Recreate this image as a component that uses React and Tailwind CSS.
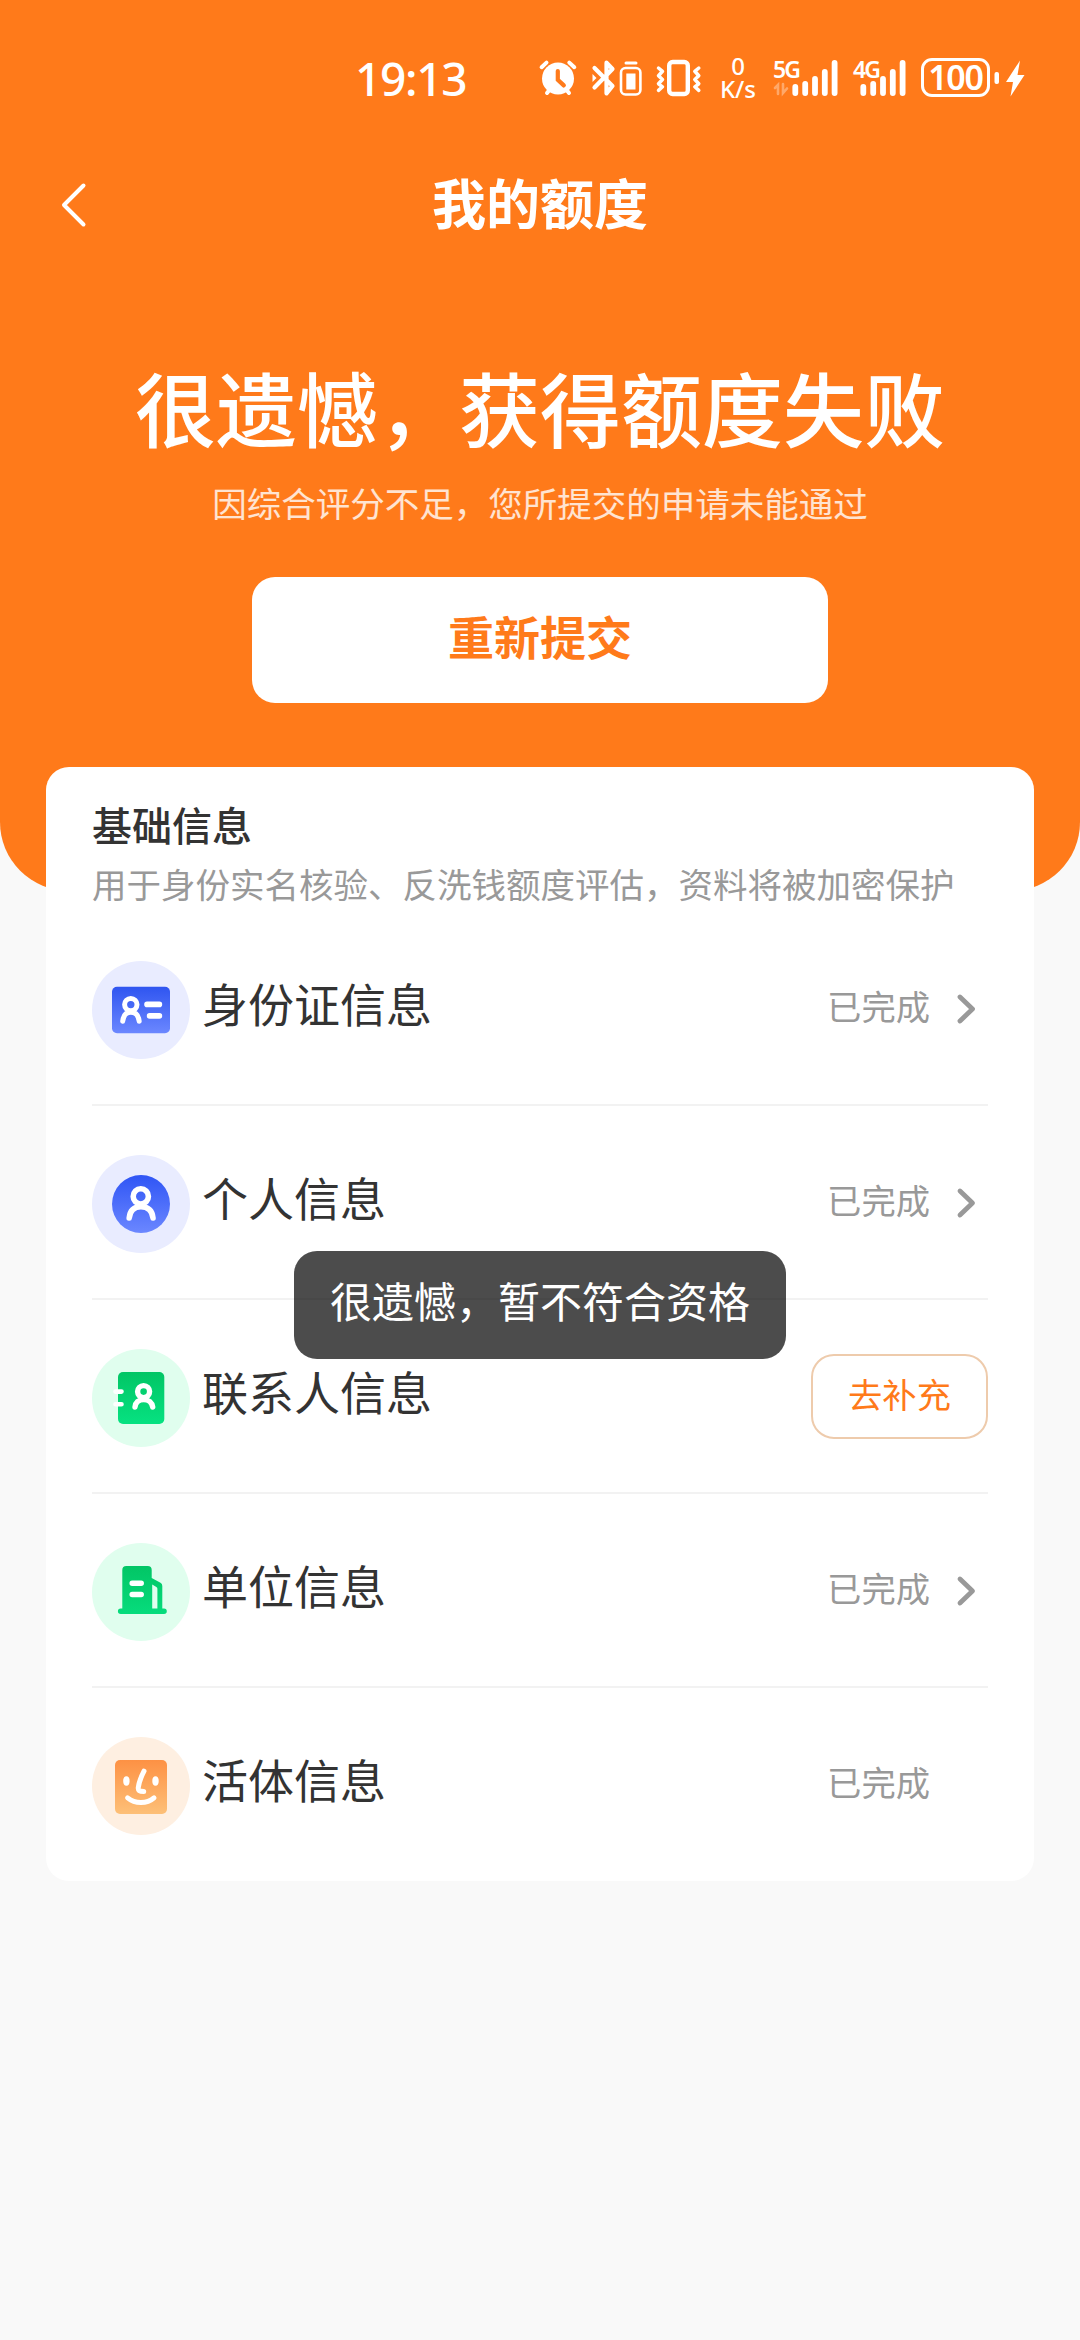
import { Fragment } from 'react'

const ITEMS = [
  { id: 'idcard', name: '身份证信息', icon: IdCardIcon, tone: 'bg-[#e9ecff]', status: 'done', arrow: true },
  { id: 'person', name: '个人信息', icon: PersonIcon, tone: 'bg-[#e9ecff]', status: 'done', arrow: true },
  { id: 'contact', name: '联系人信息', icon: ContactIcon, tone: 'bg-[#e0feee]', status: 'todo' },
  { id: 'company', name: '单位信息', icon: CompanyIcon, tone: 'bg-[#e0feee]', status: 'done', arrow: true },
  { id: 'face', name: '活体信息', icon: FaceIcon, tone: 'bg-[#feefe1]', status: 'done' },
]

function Gradient({ id, from, to }) {
  return (
    <defs>
      <linearGradient id={id} x1="0" y1="0" x2="0" y2="1">
        <stop offset="0" stopColor={from} />
        <stop offset="1" stopColor={to} />
      </linearGradient>
    </defs>
  )
}

function IdCardIcon() {
  return (
    <svg viewBox="0 0 98 98" className="size-full" fill="none" stroke="#fff" strokeWidth="5" strokeLinecap="round">
      <Gradient id="g-idcard" from="#2f55f0" to="#6b87ff" />
      <rect x="20" y="25.7" width="58" height="46.6" rx="5" fill="url(#g-idcard)" stroke="none" />
      <circle cx="38.8" cy="43.6" r="6.2" />
      <path d="M30.7 60.3C31.3 54.5 34 51.3 38.8 51.3S46.6 54.5 47.2 60.3" />
      <path d="M55 43.4h12.4M57.6 54.9h9.8" strokeWidth="5.6" />
    </svg>
  )
}

function PersonIcon() {
  return (
    <svg viewBox="0 0 98 98" className="size-full" fill="none" stroke="#fff" strokeWidth="5.6" strokeLinecap="round">
      <Gradient id="g-person" from="#2f55f5" to="#6b87ff" />
      <circle cx="49" cy="49" r="29" fill="url(#g-person)" stroke="none" />
      <circle cx="48.8" cy="41.4" r="7.6" />
      <path d="M37.2 63C38 55.5 42 51.8 48.9 51.8S60.2 55.5 61 63" />
    </svg>
  )
}

function ContactIcon() {
  return (
    <svg viewBox="0 0 98 98" className="size-full" fill="none" stroke="#fff" strokeWidth="5.4" strokeLinecap="round">
      <Gradient id="g-contact" from="#02c565" to="#06e281" />
      <rect x="26" y="23" width="46.3" height="52" rx="5" fill="url(#g-contact)" stroke="none" />
      <path d="M23.5 42.6h6M23.5 55.2h6" strokeWidth="4.6" />
      <circle cx="51.6" cy="42.6" r="6" />
      <path d="M43 58C43.5 53.5 46.5 50.6 51.6 50.6S60 53.5 60.7 58" />
    </svg>
  )
}

function CompanyIcon() {
  return (
    <svg viewBox="0 0 98 98" className="size-full" strokeLinecap="round">
      <Gradient id="g-company" from="#02c565" to="#06dc7c" />
      <path
        fill="url(#g-company)"
        d="M30.3 27a4 4 0 0 1 4-4h21.4a4 4 0 0 1 4 4v8l8.8 4.8a3.5 3.5 0 0 1 1.8 3.1v22.6h1.7a2.8 2.8 0 0 1 0 5.6H28.7a2.8 2.8 0 0 1 0-5.6h1.6z"
      />
      <path d="M60.2 41.6l4.2 2.4a2 2 0 0 1 1 1.7v19.8h-5.2z" fill="#e0feee" />
      <path d="M40.2 40.3h9M40.2 51.5h9" stroke="#fff" strokeWidth="5.5" />
    </svg>
  )
}

function FaceIcon() {
  return (
    <svg viewBox="0 0 98 98" className="size-full" fill="none" stroke="#fff" strokeWidth="5" strokeLinecap="round" strokeLinejoin="round">
      <Gradient id="g-face" from="#fd9144" to="#fdc078" />
      <rect x="23" y="23" width="52" height="54" rx="5" fill="url(#g-face)" stroke="none" />
      <ellipse cx="34.4" cy="44" rx="3.2" ry="4.8" fill="#fff" stroke="none" />
      <ellipse cx="63.5" cy="44" rx="3.2" ry="4.8" fill="#fff" stroke="none" />
      <path d="M52 34.2C49.5 39 47 45 46.3 50.5c-.4 3 1.2 4 5.4 4" />
      <path d="M35.6 60.8C43 67 55 67 62 60.8" />
    </svg>
  )
}

function SignalIcon({ label, className, arrows }) {
  return (
    <div className="relative h-[44px] w-[66px]">
      <span className={`absolute top-0 text-[23px] leading-[26px] font-semibold tracking-[-2px] ${className}`}>{label}</span>
      <svg viewBox="0 0 66 44" className="size-full" stroke="#fff" strokeWidth="5.8" strokeLinecap="round">
        <path d="M22.3 31v6M32.2 27.8v9.2M42 23v14M51.8 16v21M61.6 7v30" />
        {arrows && <path d="M2 32l3-3v9M10 28v9l4-4.5" fill="none" strokeWidth="2.6" opacity=".35" />}
      </svg>
    </div>
  )
}

function StatusBar() {
  return (
    <div className="flex h-[44px] text-white font-['Noto_Sans',sans-serif]">
      <div className="ml-[355px] w-[183px] text-[46px] leading-[44px] font-medium tracking-[-1.3px]">19:13</div>
      <svg viewBox="0 0 40 44" className="h-[44px] w-[40px]" stroke="#fff" strokeWidth="5" strokeLinecap="round" fill="none">
        <path d="M3.6 11.2L8.5 6.6M31.3 6.6l5 4.6M9 37l4-5M31 37l-4-5" strokeWidth="4" />
        <circle cx="20" cy="22.5" r="16" fill="#fff" stroke="none" />
        <path d="M19.8 15v8.8l6 5.6" stroke="#ff7a1a" strokeWidth="4.2" />
      </svg>
      <svg viewBox="0 0 52 44" className="ml-[13px] h-[44px] w-[52px]" stroke="#fff" fill="none" strokeLinecap="round" strokeLinejoin="round">
        <path d="M3.5 12l18 18-6 7.3V6.7l6 6.3-18 18.5" strokeWidth="4.2" />
        <path d="M1.5 18v8l4-4z" fill="#fff" stroke="none" />
        <rect x="30" y="12" width="19.4" height="26.5" rx="4.5" strokeWidth="2.6" />
        <rect x="35.3" y="17.5" width="9.2" height="16" fill="#fff" stroke="none" />
        <path d="M35 7h10" strokeWidth="3" />
      </svg>
      <svg viewBox="0 0 48 44" className="ml-[12px] h-[44px] w-[48px]" stroke="#fff" fill="none" strokeLinecap="round" strokeLinejoin="round">
        <rect x="14.2" y="6" width="18.6" height="32" rx="3.5" strokeWidth="4.4" />
        <path d="M3.5 12l4 3.3-4 4.4 4 3.8-4 4.3 4 3-4 3.6M43.8 12l-4 3.3 4 4.4-4 3.8 4 4.3-4 3 4 3.6" strokeWidth="3.5" />
      </svg>
      <div className="-mt-[2px] ml-[15px] w-[40px] text-center text-[24px] leading-[23px] font-medium">
        <div>0</div>
        <div>K/s</div>
      </div>
      <div className="ml-[15px]"><SignalIcon label="5G" className="left-0" arrows /></div>
      <div className="ml-[2px]"><SignalIcon label="4G" className="left-[12px]" /></div>
      <div className="ml-[14px] mt-[2px] flex h-[39px] w-[69px] items-center justify-center rounded-[11px] border-[3px] border-white text-[34px] font-semibold tracking-[-1.2px]">100</div>
      <svg viewBox="0 0 36 44" className="ml-[3px] h-[44px] w-[36px]" fill="#fff">
        <rect x="1.5" y="16" width="4.5" height="12" rx="2" />
        <path d="M27 4.5L13 26h7l-2.5 14.5L31.5 19h-7z" />
      </svg>
    </div>
  )
}

function ItemRow({ item }) {
  const Icon = item.icon
  return (
    <div className="flex h-[192px] items-center">
      <div className={`mt-[4px] size-[98px] rounded-full ${item.tone}`}><Icon /></div>
      <div className="ml-[12px] -mt-[12px] flex-1 text-[46px] leading-[60px] text-[#333]">{item.name}</div>
      {item.status === 'todo' ? (
        <button className="h-[85px] w-[177px] rounded-[23px] border-2 border-[#eecbac] pb-[6px] text-[34.3px] leading-[50px] text-[#ff7a1a]">去补充</button>
      ) : (
        <>
          <div className="-mt-[7px] text-[34.3px] leading-[50px] text-[#999]">已完成</div>
          <svg viewBox="0 0 58 34" className="mt-[2px] h-[34px] w-[58px]" fill="none" stroke="#999" strokeWidth="4.8" strokeLinecap="round" strokeLinejoin="round">
            {item.arrow && <path d="M30 5l12.5 12L30 29" />}
          </svg>
        </>
      )}
    </div>
  )
}

export default function App() {
  return (
    <div className="relative h-[2340px] w-[1080px] overflow-hidden bg-[#f9f9f9] font-['Noto_Sans_CJK_SC',sans-serif]">
      <header className="flex h-[891px] flex-col items-center rounded-b-[69px] bg-[#ff7a1a] pt-[56px] text-white">
        <div className="w-full"><StatusBar /></div>
        <div className="mt-[65px] grid h-[80px] w-full grid-cols-3 items-center px-[60px]">
          <svg viewBox="0 0 30 46" className="h-[46px] w-[30px]" fill="none" stroke="#fff" strokeWidth="4" strokeLinecap="round" strokeLinejoin="round">
            <path d="M23.5 3.5L4 23l19.500 19.500" />
          </svg>
          <h1 className="-mt-[6px] text-center text-[54px] leading-[80px] font-bold">我的额度</h1>
        </div>
        <h2 className="mt-[103px] text-[81px] leading-[116px] font-medium whitespace-nowrap">很遗憾，获得额度失败</h2>
        <p className="mt-[13px] text-[34.5px] leading-[50px] text-white/80">因综合评分不足，您所提交的申请未能通过</p>
        <button className="mt-[50px] h-[126px] w-[576px] rounded-[23px] bg-white pb-[10px] text-[46px] font-bold text-[#ff7a1a]">重新提交</button>
      </header>

      <main className="relative mx-[46px] -mt-[124px] h-[1114px] rounded-[23px] bg-white px-[46px] pt-[28px]">
        <h3 className="text-[40px] leading-[58px] font-medium text-[#333]">基础信息</h3>
        <p className="mt-[5px] mb-[4px] text-[34.5px] leading-[50px] whitespace-nowrap text-[#999]">用于身份实名核验、反洗钱额度评估，资料将被加密保护</p>
        {ITEMS.map((item, i) => (
          <Fragment key={item.id}>
            {i > 0 && <div className="h-[2px] bg-[#f2f2f2]" />}
            <ItemRow item={item} />
          </Fragment>
        ))}
      </main>

      <div className="absolute top-[1251px] left-[294px] flex h-[108px] w-[492px] items-center justify-center rounded-[23px] bg-black/70 pb-[11px] text-[42px] whitespace-nowrap text-white">
        很遗憾，暂不符合资格
      </div>
    </div>
  )
}
